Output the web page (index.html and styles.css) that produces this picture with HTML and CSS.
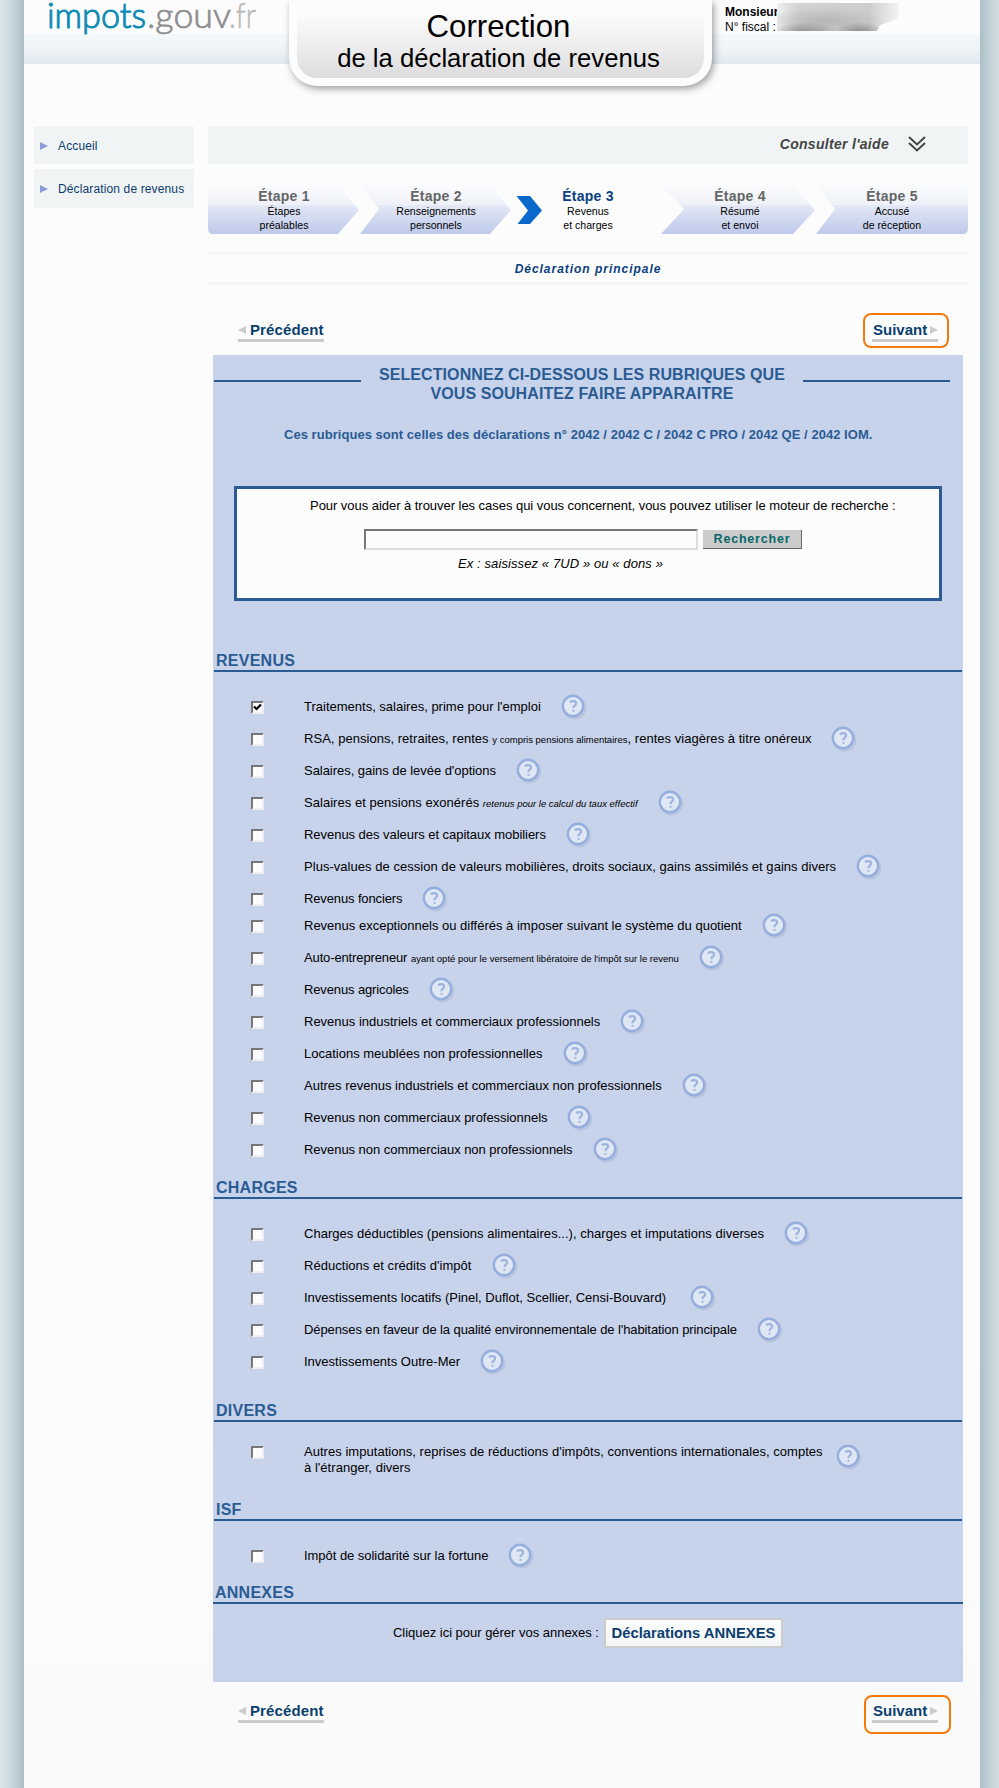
FILE: index.html
```html
<!DOCTYPE html>
<html lang="fr">
<head>
<meta charset="utf-8">
<title>Correction de la déclaration de revenus</title>
<link rel="stylesheet" href="styles.css">
</head>
<body>
<svg class="defs" width="0" height="0">
  <defs>
    <linearGradient id="stepFill" x1="0" y1="0" x2="0" y2="1">
      <stop offset="0" stop-color="#fafbfc"/>
      <stop offset=".4" stop-color="#eef1f8"/>
      <stop offset=".42" stop-color="#e3e8f5"/>
      <stop offset=".75" stop-color="#cdd6ef"/>
      <stop offset="1" stop-color="#bfc9ea"/>
    </linearGradient>
    <symbol id="help" viewBox="0 0 28 28">
      <circle cx="13.6" cy="13.8" r="11.6" fill="#aebbd6" opacity=".6"/>
      <circle cx="12" cy="12" r="10.2" fill="#dfe7f5" stroke="#95aedd" stroke-width="2.4"/>
      <path d="M8.9 8.2Q10.3 7.1 12.1 7.1Q15.1 7.1 15.1 9.4Q15.1 10.6 13.7 11.6Q12.5 12.5 12.5 13.7V14.2M12.5 15.9V17.8" fill="none" stroke="#9db3de" stroke-width="2.1"/>
    </symbol>
  </defs>
</svg>
<div class="page">
  <header class="header">
    <svg class="logo" width="216" height="36" viewBox="0 0 216 36">
      <text y="28" font-size="35"><tspan class="logo-a" x="-1" textLength="99" lengthAdjust="spacingAndGlyphs">impots</tspan><tspan class="logo-b" x="99" textLength="84" lengthAdjust="spacingAndGlyphs">.gouv</tspan><tspan class="logo-c" x="181" textLength="27" lengthAdjust="spacingAndGlyphs">.fr</tspan></text>
    </svg>
    <div class="title-tab">
      <h1 class="title"><span class="title-main">Correction</span><span class="title-sub">de la déclaration de revenus</span></h1>
    </div>
    <div class="user">
      <div class="user-line"><b>Monsieur</b></div>
      <div class="user-line">N° fiscal :</div>
      <div class="user-mask"></div>
    </div>
  </header>

  <div class="columns">
    <nav class="side">
      <a class="side-link">Accueil</a>
      <a class="side-link side-link-tall">Déclaration de revenus</a>
    </nav>
    <main class="main">
      <div class="help-bar"><span>Consulter l'aide</span>
        <svg width="18" height="16" viewBox="0 0 18 16" fill="none" stroke="#444" stroke-width="1.9"><path d="M1 1l8 7.5L17 1M1 7l8 7.5L17 7"/></svg>
      </div>

      <div class="steps">
        <div class="step"><svg class="step-bg" viewBox="0 0 152 49"><path d="M0 0H130L151 25L130 49H5Q0 49 0 43Z" fill="url(#stepFill)"/></svg><b>Étape 1</b><span>Étapes<br>préalables</span></div>
        <div class="step"><svg class="step-bg" viewBox="0 0 152 49"><path d="M0 0L19 24L0 49H130L151 25L130 0Z" fill="url(#stepFill)"/></svg><b>Étape 2</b><span>Renseignements<br>personnels</span></div>
        <div class="step step-on"><svg class="step-bg" viewBox="0 0 152 49"><path d="M4.500 11H18L30 25.500L18 39H5.500L16 25.500Z" fill="#0868cc"/></svg><b>Étape 3</b><span>Revenus<br>et charges</span></div>
        <div class="step"><svg class="step-bg" viewBox="0 0 152 49"><path d="M-3 0L20 24L-3 49H129L151 25L129 0Z" fill="url(#stepFill)"/></svg><b>Étape 4</b><span>Résumé<br>et envoi</span></div>
        <div class="step"><svg class="step-bg" viewBox="0 0 152 49"><path d="M0 0L19 24L0 49H147Q152 49 152 43V5Q152 0 147 0Z" fill="url(#stepFill)"/></svg><b>Étape 5</b><span>Accusé<br>de réception</span></div>
      </div>

      <div class="subtitle">Déclaration principale</div>

      <div class="pager">
        <a class="pager-link"><i class="tri tri-left"></i>Précédent</a>
        <span class="ring"><a class="pager-link">Suivant<i class="tri tri-right"></i></a></span>
      </div>

      <section class="panel">
        <div class="intro"><i class="bar"></i><h2 class="intro-title">SELECTIONNEZ CI-DESSOUS LES RUBRIQUES QUE<br>VOUS SOUHAITEZ FAIRE APPARAITRE</h2><i class="bar"></i></div>
        <p class="forms">Ces rubriques sont celles des déclarations n° 2042 / 2042 C / 2042 C PRO / 2042 QE / 2042 IOM.</p>

        <div class="search">
          <p class="search-label">Pour vous aider à trouver les cases qui vous concernent, vous pouvez utiliser le moteur de recherche :</p>
          <div class="search-row"><input class="field" type="text"><button class="search-btn">Rechercher</button></div>
          <p class="example">Ex : saisissez « 7UD » ou « dons »</p>
        </div>

        <h3 class="head">REVENUS</h3>
        <div class="rows">
          <div class="row"><i class="box"><svg width="9" height="9" viewBox="0 0 9 9"><path d="M1 3.500L3.500 6L8 1.500" fill="none" stroke="#000" stroke-width="2.200"/></svg></i><span>Traitements, salaires, prime pour l'emploi</span><svg class="q"><use href="#help"/></svg></div>
          <div class="row loose"><i class="box"></i><span>RSA, pensions, retraites, rentes <small>y compris pensions alimentaires</small>, rentes viagères à titre onéreux</span><svg class="q"><use href="#help"/></svg></div>
          <div class="row snug"><i class="box"></i><span>Salaires, gains de levée d'options</span><svg class="q"><use href="#help"/></svg></div>
          <div class="row loose"><i class="box"></i><span>Salaires et pensions exonérés <small><em>retenus pour le calcul du taux effectif</em></small></span><svg class="q"><use href="#help"/></svg></div>
          <div class="row snug"><i class="box"></i><span>Revenus des valeurs et capitaux mobiliers</span><svg class="q"><use href="#help"/></svg></div>
          <div class="row loose"><i class="box"></i><span>Plus-values de cession de valeurs mobilières, droits sociaux, gains assimilés et gains divers</span><svg class="q"><use href="#help"/></svg></div>
          <div class="row tighter"><i class="box"></i><span>Revenus fonciers</span><svg class="q"><use href="#help"/></svg></div>
          <div class="row row-tight"><i class="box"></i><span>Revenus exceptionnels ou différés à imposer suivant le système du quotient</span><svg class="q"><use href="#help"/></svg></div>
          <div class="row"><i class="box"></i><span><span class="tighter">Auto-entrepreneur</span> <small>ayant opté pour le versement libératoire de l'impôt sur le revenu</small></span><svg class="q"><use href="#help"/></svg></div>
          <div class="row tighter"><i class="box"></i><span>Revenus agricoles</span><svg class="q"><use href="#help"/></svg></div>
          <div class="row"><i class="box"></i><span>Revenus industriels et commerciaux professionnels</span><svg class="q"><use href="#help"/></svg></div>
          <div class="row"><i class="box"></i><span>Locations meublées non professionnelles</span><svg class="q"><use href="#help"/></svg></div>
          <div class="row"><i class="box"></i><span>Autres revenus industriels et commerciaux non professionnels</span><svg class="q"><use href="#help"/></svg></div>
          <div class="row snug"><i class="box"></i><span>Revenus non commerciaux professionnels</span><svg class="q"><use href="#help"/></svg></div>
          <div class="row snug"><i class="box"></i><span>Revenus non commerciaux non professionnels</span><svg class="q"><use href="#help"/></svg></div>
        </div>

        <h3 class="head head-charges">CHARGES</h3>
        <div class="rows">
          <div class="row loose"><i class="box"></i><span>Charges déductibles (pensions alimentaires...), charges et imputations diverses</span><svg class="q"><use href="#help"/></svg></div>
          <div class="row loose"><i class="box"></i><span>Réductions et crédits d'impôt</span><svg class="q"><use href="#help"/></svg></div>
          <div class="row"><i class="box"></i><span>Investissements locatifs (Pinel, Duflot, Scellier, Censi-Bouvard)&nbsp;</span><svg class="q"><use href="#help"/></svg></div>
          <div class="row tight"><i class="box"></i><span>Dépenses en faveur de la qualité environnementale de l'habitation principale</span><svg class="q"><use href="#help"/></svg></div>
          <div class="row"><i class="box"></i><span>Investissements Outre-Mer</span><svg class="q"><use href="#help"/></svg></div>
        </div>

        <h3 class="head head-divers">DIVERS</h3>
        <div class="rows rows-divers">
          <div class="row row-double loose"><i class="box"></i><span>Autres imputations, reprises de réductions d'impôts, conventions internationales, comptes<br>à l'étranger, divers</span><svg class="q"><use href="#help"/></svg></div>
        </div>

        <h3 class="head head-isf">ISF</h3>
        <div class="rows">
          <div class="row snug"><i class="box"></i><span>Impôt de solidarité sur la fortune</span><svg class="q"><use href="#help"/></svg></div>
        </div>

        <h3 class="head head-annexes">ANNEXES</h3>
        <div class="annexes"><span>Cliquez ici pour gérer vos annexes :</span><button class="annex-btn">Déclarations ANNEXES</button></div>
      </section>

      <div class="pager pager-bottom">
        <a class="pager-link"><i class="tri tri-left"></i>Précédent</a>
        <span class="ring ring-thin"><a class="pager-link">Suivant<i class="tri tri-right"></i></a></span>
      </div>
    </main>
  </div>
</div>
</body>
</html>
```
FILE: styles.css
```css
* { box-sizing: border-box; }
body {
  margin: 0;
  font: 13px/16px "Liberation Sans", Arial, sans-serif;
  color: #000;
  background:
    linear-gradient(to right, #dce5ea 0, #c8d7dd 12px, #abbfc7 24px, transparent 24px) left / 24px 100% no-repeat,
    linear-gradient(to left, #d3dde4 0, #c6d3d9 8px, #abbfc7 19px, transparent 19px) right / 19px 100% no-repeat,
    #fcfcfc;
}
h1, h2, h3, p { margin: 0; }
.defs { position: absolute; }
.page {
  width: 956px;
  height: 1788px;
  margin-left: 24px;
  background: linear-gradient(#fcfcfc 1300px, #f9faf9 1700px);
}

/* header */
.header {
  display: flex;
  height: 126px;
  align-items: flex-start;
  background: linear-gradient(#f4f9fb, #ecf2f6 60%, #dfe9ed) 0 34px / 100% 30px no-repeat;
}
.logo { margin-left: 24px; overflow: visible; font-family: Lato, sans-serif; font-weight: 300; }
.logo-a { fill: #0d8bb5; stroke: #0d8bb5; stroke-width: 1px; }
.logo-b { fill: #8f8d8f; stroke: #8f8d8f; stroke-width: .7px; }
.logo-c { fill: #b9b9b9; stroke: #b9b9b9; stroke-width: .5px; }
.title-tab {
  width: 423px;
  height: 86px;
  margin-left: 25px;
  padding: 0 8px 8px;
  background: #fcfcfc;
  border-radius: 0 0 28px 28px;
  box-shadow: 2px 3px 7px rgba(70, 70, 80, .5);
}
.title {
  height: 78px;
  padding: 10px 4px 0 0;
  border-radius: 0 0 20px 20px;
  background: linear-gradient(#fcfcfc 12px, #eeeeef 45px, #dcdcde);
  text-align: center;
  font-weight: 400;
}
.title-main { display: block; font-size: 31.2px; line-height: 34px; }
.title-sub { display: block; margin-top: -1px; font-size: 25.7px; line-height: 30px; }
.user { position: relative; margin-left: 13px; padding-top: 4.500px; font-size: 12px; line-height: 15px; }
.user-mask {
  position: absolute;
  left: 52px;
  top: 3px;
  width: 122px;
  height: 28px;
  background:
    radial-gradient(ellipse 34px 11px at 28px 30px, rgba(130, 130, 130, .9), transparent),
    radial-gradient(ellipse 26px 10px at 82px 29px, rgba(130, 130, 130, .9), transparent),
    radial-gradient(ellipse 60px 14px at 48px 18px, rgba(170, 170, 170, .7), transparent),
    linear-gradient(to right, #eee, #d2d2d2 18%, #cdcdcd 75%, #f3f3f3);
  clip-path: polygon(0 0, 100% 0, 99% 55%, 84% 80%, 82% 100%, 0 100%);
}

/* columns */
.columns { display: flex; padding-left: 10px; }
.side { display: flex; flex-direction: column; gap: 5px; width: 160px; margin-right: 14px; font-size: 12px; letter-spacing: .13px; }
.side-link {
  display: flex;
  align-items: center;
  height: 38px;
  padding: 1px 0 0 6px;
  color: #0d3c6e;
  background: #f0f4f4;
  white-space: nowrap;
}
.side-link::before {
  content: "";
  margin-right: 10px;
  border: solid transparent;
  border-width: 4px 0 4px 8px;
  border-left-color: #8a9bd8;
}
.side-link-tall { height: 39px; }
.main { width: 760px; }
.help-bar {
  display: flex;
  align-items: center;
  justify-content: flex-end;
  gap: 19px;
  height: 38px;
  padding: 0 42px 2px 0;
  background: #f0f4f4;
  color: #444;
  font: italic bold 14px/16px "Liberation Sans", Arial, sans-serif;
  letter-spacing: .3px;
}

/* wizard steps */
.steps { display: flex; height: 49px; margin-top: 21px; }
.step { position: relative; width: 152px; padding-top: 2px; text-align: center; }
.step-bg { position: absolute; left: 0; top: 0; width: 152px; height: 49px; overflow: visible; }
.step b { position: relative; display: block; font-size: 14px; line-height: 18px; letter-spacing: .25px; color: #666; }
.step span { position: relative; display: block; font-size: 10.6px; line-height: 14px; margin-top: -1px; }
.step-on b { color: #0a3f80; }
.subtitle {
  height: 33px;
  margin-top: 18px;
  border: solid #f3f6f7;
  border-width: 3px 0;
  text-align: center;
  font: italic bold 12px/29px "Liberation Sans", Arial, sans-serif;
  letter-spacing: .97px;
  color: #0a3f80;
}

/* previous / next */
.pager { display: flex; justify-content: space-between; align-items: flex-start; height: 70px; padding: 28px 19px 0 30px; }
.pager-link {
  display: inline-flex;
  align-items: center;
  height: 21px;
  border-bottom: 3px solid #cbcbcb;
  font: bold 15px/18px "Liberation Sans", Arial, sans-serif;
  letter-spacing: .12px;
  color: #0a3f6e;
}
.pager > .pager-link { margin-top: 8px; }
.tri { border: solid transparent; border-width: 4.500px 0; }
.tri-left { border-right: 8px solid #cbcbcb; margin-right: 4px; }
.tri-right { border-left: 8px solid #cbcbcb; margin-left: 3px; }
.ring { width: 86px; height: 35px; padding: 6px 0 0 7px; border: 2.500px solid #f57a0c; border-radius: 8px; }
.pager .ring .pager-link { padding-left: 1px; letter-spacing: 0; }
.pager-bottom { height: 106px; padding: 13px 17px 0 30px; }
.pager-bottom > .pager-link { margin-top: 7px; }
.ring-thin { width: 87px; height: 39px; padding: 5px 0 0 6px; border-width: 2px; }

/* panel */
.panel { width: 750px; height: 1327px; margin-left: 5px; background: #c7d2eb; }
.intro { display: flex; justify-content: space-between; padding: 9px 13px 0 1px; color: #2a5c93; }
.bar { width: 147px; height: 2px; margin-top: 16px; background: #2a5c93; }
.intro-title { padding-top: 1px; font-size: 16px; line-height: 19px; letter-spacing: .08px; text-align: center; white-space: nowrap; }
.forms { margin: 24px 0 0 71px; font-weight: bold; letter-spacing: .04px; color: #2a5c93; white-space: nowrap; line-height: 16px; }
.search { width: 708px; height: 115px; margin: 43px 0 0 21px; padding: 9px 0 0 73px; border: 3px solid #2a5c93; background: #fcfcfc; }
.search-label { white-space: nowrap; letter-spacing: -.04px; }
.search-row { display: flex; align-items: center; gap: 5px; margin: 15px 0 0 54px; }
.field { width: 334px; height: 21px; border: 2px solid; border-color: #777 #ddd #ddd #777; background: #fcfcfc; }
.search-btn {
  width: 99px;
  height: 19px;
  padding: 0;
  border: solid;
  border-width: 0 1px 1px 0;
  border-color: #666;
  background: #cbcbcb;
  font: bold 12.500px/16px "Liberation Sans", Arial, sans-serif;
  letter-spacing: .8px;
  color: #07696a;
}
.example { margin: 6px 0 0 148px; font-style: italic; letter-spacing: .1px; }
.head {
  height: 19px;
  margin: 52px 1px 0;
  padding-left: 2px;
  border-bottom: 2px solid #2a5c93;
  font-size: 16px;
  line-height: 16px;
  letter-spacing: .25px;
  color: #2a5c93;
}
.rows { padding-top: 19px; }
.row { display: flex; align-items: center; height: 32px; padding-left: 38px; white-space: nowrap; }
.row > span { margin: 0 20px 0 40px; }
.row small { font-size: 9.5px; letter-spacing: 0; }
.row-tight { margin-top: -5px; }
.loose { letter-spacing: .035px; }
.snug { letter-spacing: -.04px; }
.tight { letter-spacing: -.09px; }
.tighter { letter-spacing: -.13px; }
.box {
  width: 13px;
  height: 13px;
  border: 2px solid;
  border-color: #777 #eee #eee #777;
  background: #fcfcfc;
}
.box svg { display: block; }
.q { width: 28px; height: 28px; margin-top: 1px; }
.head-charges { margin-top: 14px; }
.head-divers { margin-top: 25px; }
.rows-divers { padding-top: 17px; }
.row-double { align-items: flex-start; height: 50px; }
.row-double .box { margin-top: 7px; }
.row-double > span { margin: 5px 13px 0 40px; }
.row-double .q { margin-top: 5px; }
.head-isf { margin-top: 13px; }
.head-annexes { margin: 13px 0 0; }
.annexes { display: flex; align-items: center; gap: 5px; padding: 14px 0 0 180px; letter-spacing: -.02px; }
.annex-btn {
  width: 179px;
  height: 30px;
  padding: 0;
  border: 2px solid #ccc;
  background: linear-gradient(#fcfcfc, #f3f6f7);
  font: bold 14.800px/20px "Liberation Sans", Arial, sans-serif;
  color: #0a3f6e;
  white-space: nowrap;
}
```
